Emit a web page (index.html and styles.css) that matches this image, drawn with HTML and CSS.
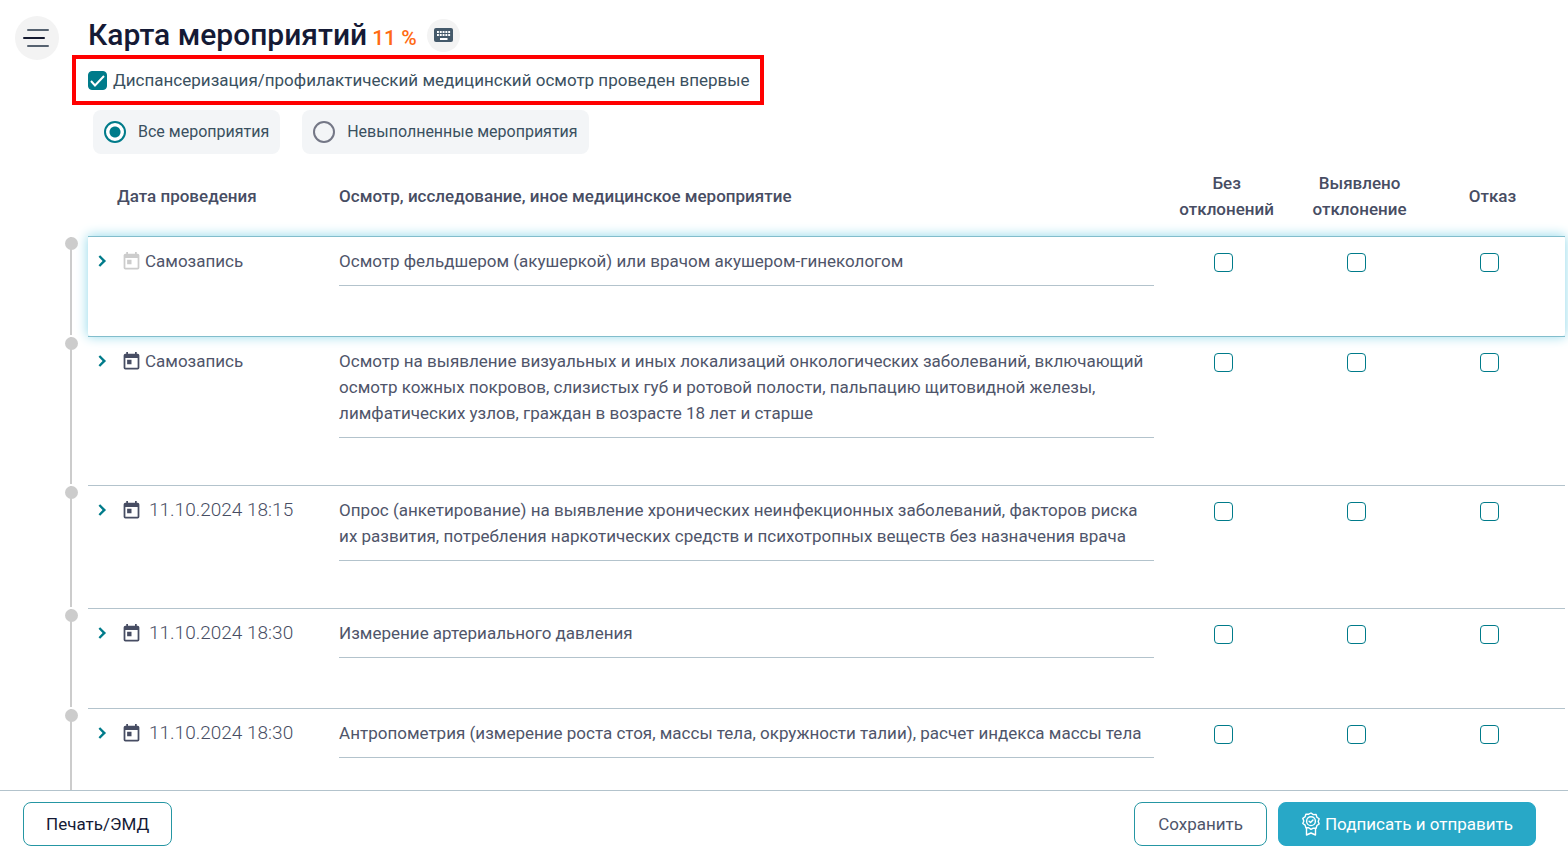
FILE: index.html
```html
<!DOCTYPE html>
<html lang="ru">
<head>
<meta charset="utf-8">
<title>Карта мероприятий</title>
<link rel="stylesheet" href="styles.css">
</head>
<body>
<svg class="sprite" aria-hidden="true">
  <symbol id="chevron" viewBox="0 0 24 24"><path d="M8.200 16.600 12.600 12 8.200 7.400 10 5.600l6.400 6.400-6.400 6.400z"/></symbol>
  <symbol id="calendar" viewBox="0 0 24 24"><path d="M19 3h-1V1h-2v2H8V1H6v2H5a2 2 0 0 0-2 2v14a2 2 0 0 0 2 2h14a2 2 0 0 0 2-2V5a2 2 0 0 0-2-2zm0 16H5V8h14v11zM7 10h5v5H7z"/></symbol>
</svg>
<div class="page">
  <div class="content">
    <aside class="side">
      <button class="menu" type="button" aria-label="Меню">
        <svg width="28" height="20" viewBox="0 0 28 20" fill="none" stroke-width="2" stroke-linecap="round"><path d="M5 2h20M5 18h20" stroke="#566270"/><path d="M1 10h20" stroke="#151a30"/></svg>
      </button>
    </aside>
    <main class="main">
      <header class="heading">
        <h1>Карта мероприятий</h1>
        <span class="percent">11 %</span>
        <button class="keyboard" type="button" aria-label="Клавиатура">
          <svg width="19" height="14" viewBox="0 0 19 14"><rect width="19" height="14" rx="2" fill="#44596a"/><path d="M3 4h14M3 7h14" stroke="#fff" stroke-width="2" stroke-dasharray="1.900 .9"/><path d="M6 11h7.500" stroke="#fff" stroke-width="2"/></svg>
        </button>
      </header>
      <label class="first-time"><input class="check" type="checkbox" checked>Диспансеризация/профилактический медицинский осмотр проведен впервые</label>
      <div class="filters">
        <label class="filter"><input type="radio" name="filter" checked>Все мероприятия</label>
        <label class="filter"><input type="radio" name="filter">Невыполненные мероприятия</label>
      </div>
      <table class="events">
        <thead>
          <tr>
            <th class="col-date" scope="col">Дата проведения</th>
            <th class="col-name" scope="col">Осмотр, исследование, иное медицинское мероприятие</th>
            <th class="col-check" scope="col">Без отклонений</th>
            <th class="col-check" scope="col">Выявлено отклонение</th>
            <th class="col-check" scope="col">Отказ</th>
          </tr>
        </thead>
        <tbody>
          <tr class="active">
            <td><div class="date"><button class="expand" type="button" aria-label="Развернуть"><svg><use href="#chevron"/></svg></button><svg class="cal off"><use href="#calendar"/></svg><span>Самозапись</span></div></td>
            <td><div class="name">Осмотр фельдшером (акушеркой) или врачом акушером-гинекологом</div></td>
            <td class="mark"><input class="check" type="checkbox" aria-label="Без отклонений"></td>
            <td class="mark"><input class="check" type="checkbox" aria-label="Выявлено отклонение"></td>
            <td class="mark"><input class="check" type="checkbox" aria-label="Отказ"></td>
          </tr>
          <tr>
            <td><div class="date"><button class="expand" type="button" aria-label="Развернуть"><svg><use href="#chevron"/></svg></button><svg class="cal"><use href="#calendar"/></svg><span>Самозапись</span></div></td>
            <td><div class="name">Осмотр на выявление визуальных и иных локализаций онкологических заболеваний, включающий осмотр кожных покровов, слизистых губ и ротовой полости, пальпацию щитовидной железы, лимфатических узлов, граждан в возрасте 18 лет и старше</div></td>
            <td class="mark"><input class="check" type="checkbox" aria-label="Без отклонений"></td>
            <td class="mark"><input class="check" type="checkbox" aria-label="Выявлено отклонение"></td>
            <td class="mark"><input class="check" type="checkbox" aria-label="Отказ"></td>
          </tr>
          <tr>
            <td><div class="date"><button class="expand" type="button" aria-label="Развернуть"><svg><use href="#chevron"/></svg></button><svg class="cal"><use href="#calendar"/></svg><time>11.10.2024 18:15</time></div></td>
            <td><div class="name">Опрос (анкетирование) на выявление хронических неинфекционных заболеваний, факторов риска их&nbsp;развития, потребления наркотических средств и психотропных веществ без назначения врача</div></td>
            <td class="mark"><input class="check" type="checkbox" aria-label="Без отклонений"></td>
            <td class="mark"><input class="check" type="checkbox" aria-label="Выявлено отклонение"></td>
            <td class="mark"><input class="check" type="checkbox" aria-label="Отказ"></td>
          </tr>
          <tr>
            <td><div class="date"><button class="expand" type="button" aria-label="Развернуть"><svg><use href="#chevron"/></svg></button><svg class="cal"><use href="#calendar"/></svg><time>11.10.2024 18:30</time></div></td>
            <td><div class="name">Измерение артериального давления</div></td>
            <td class="mark"><input class="check" type="checkbox" aria-label="Без отклонений"></td>
            <td class="mark"><input class="check" type="checkbox" aria-label="Выявлено отклонение"></td>
            <td class="mark"><input class="check" type="checkbox" aria-label="Отказ"></td>
          </tr>
          <tr>
            <td><div class="date"><button class="expand" type="button" aria-label="Развернуть"><svg><use href="#chevron"/></svg></button><svg class="cal"><use href="#calendar"/></svg><time>11.10.2024 18:30</time></div></td>
            <td><div class="name">Антропометрия (измерение роста стоя, массы тела, окружности талии), расчет индекса массы тела</div></td>
            <td class="mark"><input class="check" type="checkbox" aria-label="Без отклонений"></td>
            <td class="mark"><input class="check" type="checkbox" aria-label="Выявлено отклонение"></td>
            <td class="mark"><input class="check" type="checkbox" aria-label="Отказ"></td>
          </tr>
        </tbody>
      </table>
    </main>
  </div>
  <footer class="footer">
    <button class="btn print" type="button">Печать/ЭМД</button>
    <button class="btn save" type="button">Сохранить</button>
    <button class="btn submit" type="button">
      <svg width="20" height="24" viewBox="0 0 20 24" fill="none" stroke="#fff" stroke-width="1.4" stroke-linejoin="round" stroke-linecap="round"><path d="M10 1l2.300 1.600 2.800-.1.800 2.700 2.300 1.600-1 2.600 1 2.500-2.300 1.600-.8 2.700-2.800-.1L10 17.400l-2.300-1.700-2.800.1-.8-2.700-2.300-1.600 1-2.500-1-2.600 2.300-1.600.8-2.700 2.800.1z"/><circle cx="10" cy="9.200" r="4.400"/><path d="M8.100 9.200l1.400 1.400L12 8M5.500 16.500V23l4.500-2 4.500 2v-6.500"/></svg>
      Подписать и отправить
    </button>
  </footer>
</div>
</body>
</html>
```
FILE: styles.css
```css
* { box-sizing: border-box; }

body {
  margin: 0;
  background: #fff;
  color: #4f556a;
  font: 400 17px/26px Roboto, "Liberation Sans", sans-serif;
}

button, input { margin: 0; font: inherit; }
button { padding: 0; border: 0; background: none; cursor: pointer; }
.sprite { display: none; }

.page { display: flex; flex-direction: column; height: 100vh; }
.content { display: flex; flex: 1; min-height: 0; overflow: hidden; }
.side { flex: none; width: 88px; padding: 16px 15px; }
.main { flex: 1; min-width: 0; padding-right: 3px; }

.menu, .keyboard {
  display: grid;
  place-items: center;
  border-radius: 50%;
  background: #f3f3f3;
}
.menu { width: 44px; height: 44px; }
.keyboard { width: 33px; height: 33px; margin: 15px 0 0 5px; }

.heading { display: flex; align-items: center; gap: 5px; height: 55px; }
h1 { margin: 0; padding-top: 15px; color: #151a35; font-size: 30px; font-weight: 500; line-height: 40px; }
.percent { padding-top: 21px; color: #ff6a13; font-size: 21px; font-weight: 500; }

.first-time {
  display: flex;
  align-items: center;
  gap: 6px;
  width: fit-content;
  height: 50px;
  margin-left: -16px;
  padding: 0 11px 0 12px;
  border: 4px solid #f00;
  color: #3a5060;
}

.check {
  appearance: none;
  flex: none;
  width: 19px;
  height: 19px;
  border: 1px solid #007b8a;
  border-radius: 4px;
  background: #fff;
}
.check:checked {
  background: #007b8a url("data:image/svg+xml,%3Csvg xmlns='http://www.w3.org/2000/svg' viewBox='0 0 17 17'%3E%3Cpath d='M2 9l4 4.500L15 4' fill='none' stroke='white' stroke-width='2'/%3E%3C/svg%3E") center / 17px no-repeat;
}

.filters { display: flex; gap: 22px; padding: 5px 5px 0; }
.filter {
  display: flex;
  align-items: center;
  gap: 12px;
  height: 44px;
  padding: 0 11px;
  border-radius: 8px;
  background: #f3f5f7;
  color: #3a5060;
  font-size: 16px;
}
.filter input {
  appearance: none;
  width: 22px;
  height: 22px;
  border: 2px solid #747786;
  border-radius: 50%;
}
.filter input:checked {
  border-color: #007b8a;
  background: radial-gradient(circle, #007b8a 5px, #fff 6px);
}

.events { width: 100%; border-spacing: 0; table-layout: fixed; }
.events th { padding: 16px 12px 14px 0; color: #474d63; font-weight: 500; text-align: left; }
.events th.col-date { width: 17%; padding-left: 29px; }
.col-name { width: 56%; }
.events th.col-check { width: 9%; text-align: center; }
.events td {
  height: 100px;
  padding: 11px 12px 47px 0;
  border-top: 1px solid #b3c3cc;
  vertical-align: top;
}
.events tbody tr { position: relative; }
.events td.mark { padding: 16px 18px 0 0; line-height: 0; text-align: center; }

/* Timeline in the gutter left of the table */
.events td:first-child::before,
.events td:first-child::after {
  content: "";
  position: absolute;
  background: #ccc;
}
.events td:first-child::before { top: 1px; bottom: 1px; left: -18px; width: 2px; }
.events td:first-child::after { top: 1px; left: -23px; width: 13px; height: 13px; border-radius: 50%; }

.events .active { border-radius: 3px; box-shadow: 0 0 12px 1px #9bdcec; }
.events .active td,
.events .active + tr td { border-color: #82bdcc; }

.name { padding-bottom: 11px; border-bottom: 1px solid #b3c3cc; }
.date { display: flex; align-items: center; padding-left: 3px; }
.expand { width: 22px; height: 22px; line-height: 0; }
.expand svg { width: 22px; height: 22px; fill: #007b8a; }
.cal { width: 21px; height: 21px; margin: 0 3px 0 8px; fill: #474d63; }
.cal.off { fill: #ccc; }
.date time { padding-left: 4px; color: #474d63; font-size: 19px; font-weight: 300; }

.footer {
  display: flex;
  align-items: center;
  gap: 11px;
  flex: none;
  height: 65px;
  padding: 2px 32px 0 23px;
  border-top: 1px solid #b3c3cc;
  background: #fff;
}
.btn { height: 44px; padding: 0 22px; border: 1px solid #2596a3; border-radius: 8px; white-space: nowrap; }
.print { margin-right: auto; color: #151a35; }
.save { padding: 0 23px; color: #4f556a; }
.submit {
  display: flex;
  align-items: center;
  gap: 4px;
  border-color: #28a8c7;
  background: #28a8c7;
  color: #fff;
}
```
